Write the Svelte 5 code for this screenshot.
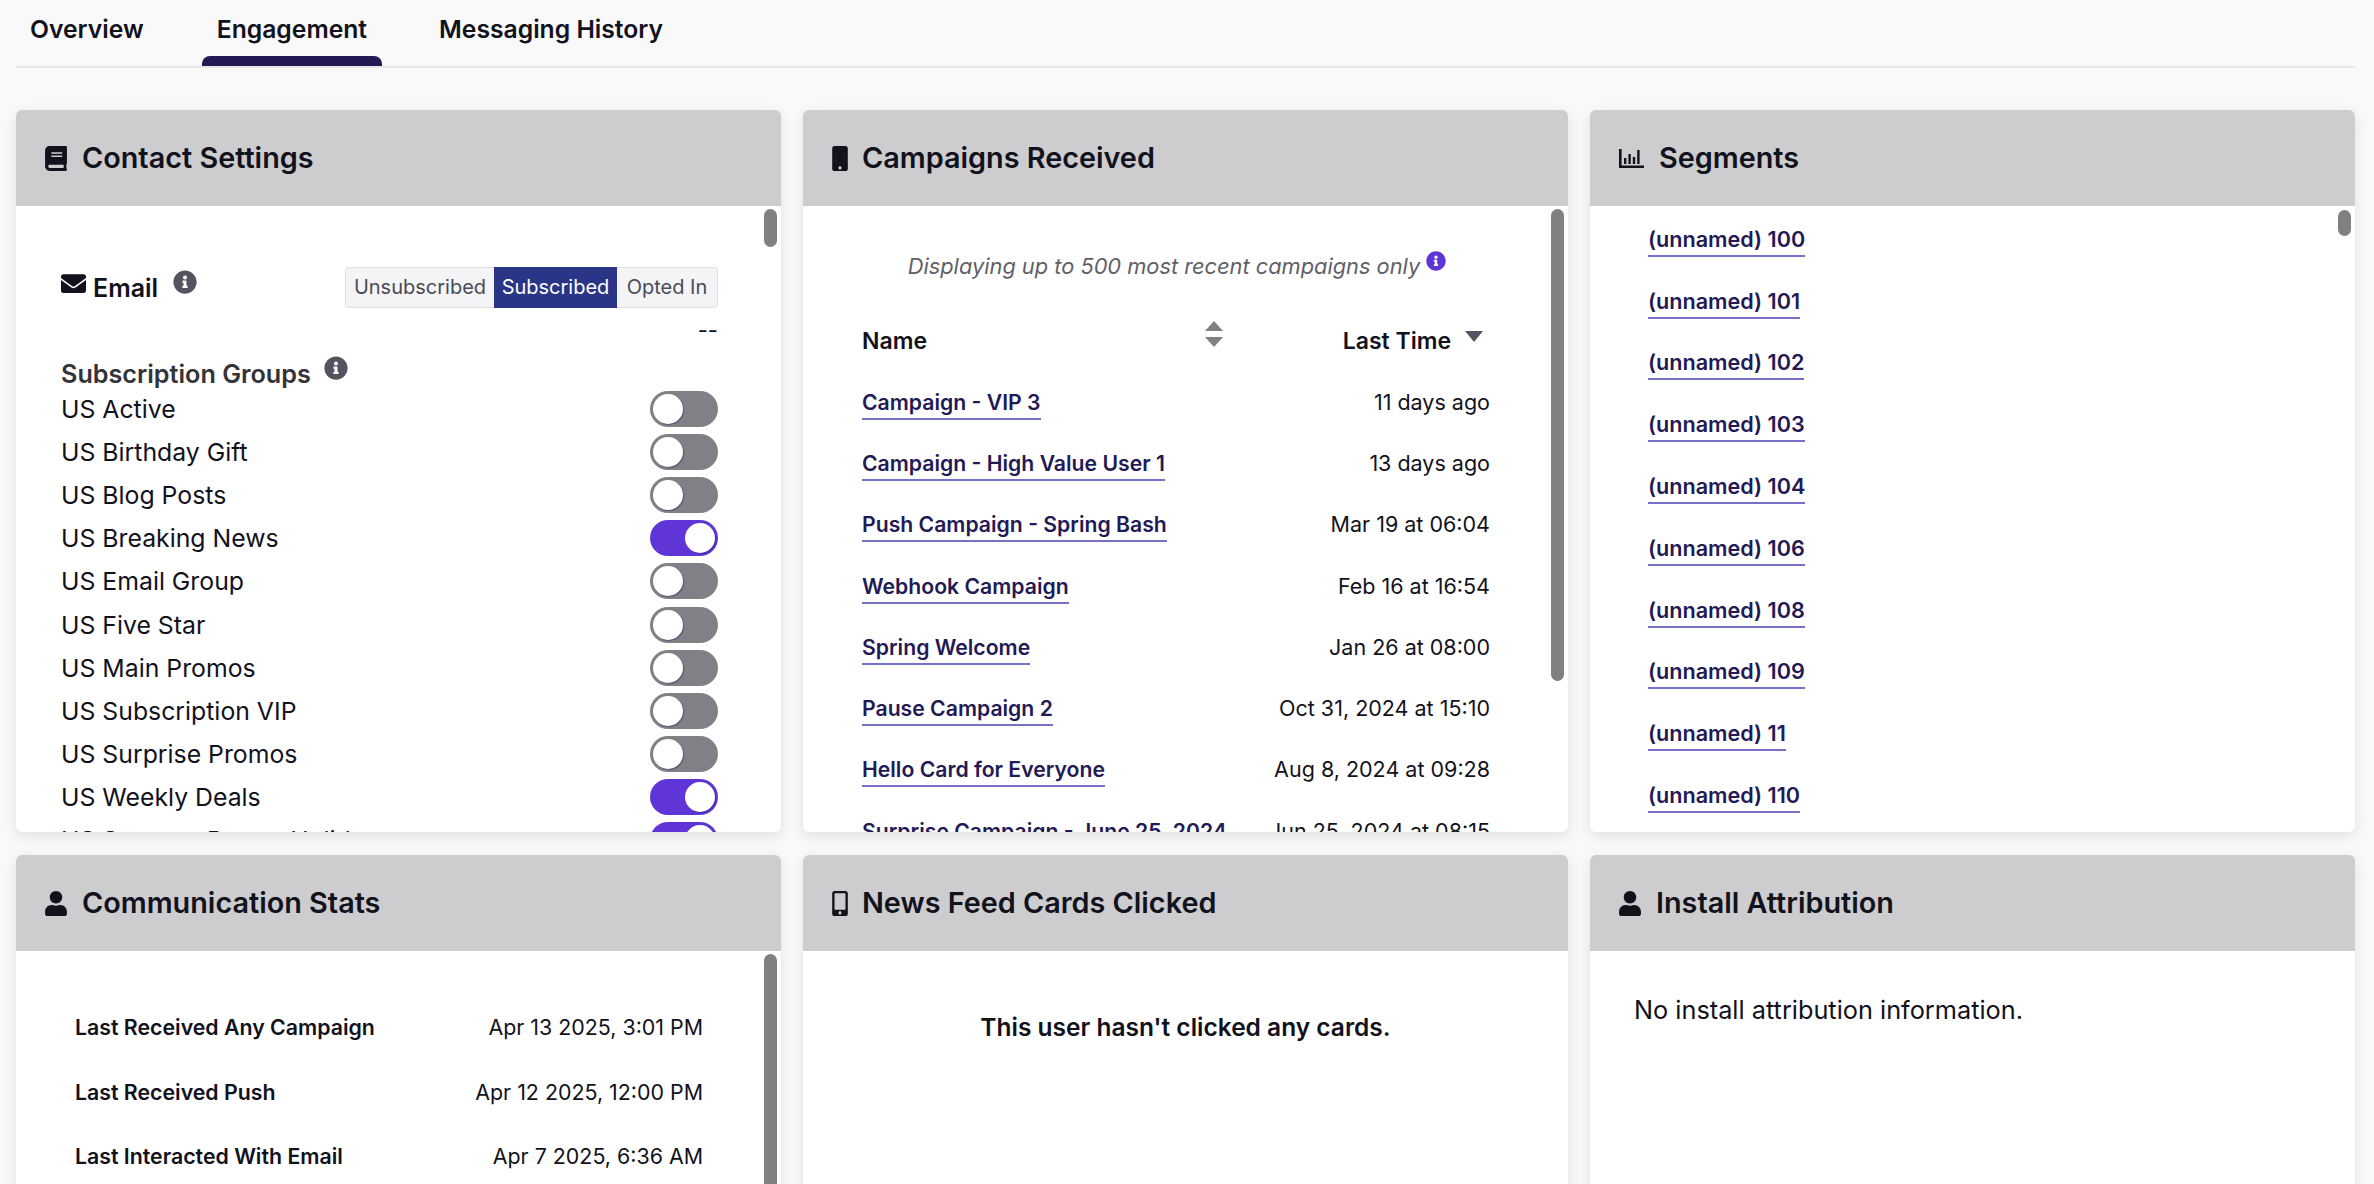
<script>
  const tabs = ['Overview', 'Engagement', 'Messaging History'];
  const groups = [
    ['US Active', false],
    ['US Birthday Gift', false],
    ['US Blog Posts', false],
    ['US Breaking News', true],
    ['US Email Group', false],
    ['US Five Star', false],
    ['US Main Promos', false],
    ['US Subscription VIP', false],
    ['US Surprise Promos', false],
    ['US Weekly Deals', true],
    ['US Summer Promo Holiday', true]
  ];
  const campaigns = [
    ['Campaign - VIP 3', '11 days ago'],
    ['Campaign - High Value User 1', '13 days ago'],
    ['Push Campaign - Spring Bash', 'Mar 19 at 06:04'],
    ['Webhook Campaign', 'Feb 16 at 16:54'],
    ['Spring Welcome', 'Jan 26 at 08:00'],
    ['Pause Campaign 2', 'Oct 31, 2024 at 15:10'],
    ['Hello Card for Everyone', 'Aug 8, 2024 at 09:28'],
    ['Surprise Campaign - June 25, 2024', 'Jun 25, 2024 at 08:15']
  ];
  const segments = ['100', '101', '102', '103', '104', '106', '108', '109', '11', '110'];
  const stats = [
    ['Last Received Any Campaign', 'Apr 13 2025, 3:01 PM'],
    ['Last Received Push', 'Apr 12 2025, 12:00 PM'],
    ['Last Interacted With Email', 'Apr 7 2025, 6:36 AM']
  ];

  // font awesome style paths
  const infoPath = 'M256 8C119 8 8 119.1 8 256c0 137 111 248 248 248s248-111 248-248C504 119.1 393 8 256 8zm0 110c23.2 0 42 18.8 42 42s-18.8 42-42 42-42-18.8-42-42 18.8-42 42-42zm56 254c0 6.6-5.4 12-12 12h-88c-6.6 0-12-5.4-12-12v-24c0-6.6 5.4-12 12-12h12v-64h-12c-6.6 0-12-5.4-12-12v-24c0-6.6 5.4-12 12-12h64c6.6 0 12 5.4 12 12v100h12c6.6 0 12 5.4 12 12v24z';
  const userPath = 'M224 256c70.7 0 128-57.3 128-128S294.7 0 224 0 96 57.3 96 128s57.3 128 128 128zm89.6 32h-16.7c-22.2 10.2-46.9 16-72.9 16s-50.6-5.8-72.9-16h-16.7C60.2 288 0 348.2 0 422.4V464c0 26.5 21.5 48 48 48h352c26.5 0 48-21.5 48-48v-41.6c0-74.2-60.2-134.4-134.4-134.4z';
</script>

<div class="page">
  <nav class="tabs">
    {#each tabs as tab}
      <div class="tab" class:active={tab === 'Engagement'}>{tab}</div>
    {/each}
  </nav>

  <main class="grid">
    <section class="card">
      <header class="card-head">
        <svg class="head-icon" viewBox="0 0 448 512"><path d="M448 360V24c0-13.3-10.7-24-24-24H96C43 0 0 43 0 96v320c0 53 43 96 96 96h328c13.3 0 24-10.7 24-24v-16c0-7.5-3.5-14.3-8.9-18.7-4.2-15.4-4.2-59.3 0-74.7 5.4-4.3 8.9-11.1 8.9-18.6zM128 134c0-3.3 2.7-6 6-6h212c3.3 0 6 2.7 6 6v20c0 3.3-2.7 6-6 6H134c-3.3 0-6-2.7-6-6v-20zm0 64c0-3.3 2.7-6 6-6h212c3.3 0 6 2.7 6 6v20c0 3.3-2.7 6-6 6H134c-3.3 0-6-2.7-6-6v-20zm253.4 250H96c-17.7 0-32-14.3-32-32 0-17.6 14.4-32 32-32h285.4c-1.9 17.1-1.9 46.9 0 64z" /></svg>
        <h2>Contact Settings</h2>
      </header>
      <div class="card-body settings">
        <div class="thumb thumb-settings"></div>
        <div class="email-row">
          <svg class="mail-icon" viewBox="0 0 512 512"><path d="M502.3 190.8c3.9-3.1 9.7-.2 9.7 4.7V400c0 26.5-21.5 48-48 48H48c-26.5 0-48-21.5-48-48V195.6c0-5 5.7-7.8 9.7-4.7 22.4 17.4 52.1 39.5 154.1 113.6 21.1 15.4 56.7 47.8 92.2 47.6 35.7.3 72-32.8 92.3-47.6 102-74.1 131.6-96.3 154-113.7zM256 320c23.2.4 56.6-29.2 73.4-41.4 132.7-96.3 142.8-104.7 173.4-128.7 5.8-4.5 9.2-11.5 9.2-18.9v-19c0-26.5-21.5-48-48-48H48C21.5 64 0 85.5 0 112v19c0 7.4 3.4 14.3 9.2 18.9 30.6 23.9 40.7 32.4 173.4 128.7 16.8 12.2 50.2 41.8 73.4 41.4z" /></svg>
          <span class="email-label">Email</span>
          <svg class="info grey email-info" viewBox="0 0 512 512"><path d={infoPath} /></svg>
          <div class="segmented">
            <span class="seg seg-first">Unsubscribed</span>
            <span class="seg seg-on">Subscribed</span>
            <span class="seg seg-last">Opted In</span>
          </div>
        </div>
        <div class="dashes">--</div>
        <div class="groups-title">
          <span>Subscription Groups</span>
          <svg class="info grey" viewBox="0 0 512 512"><path d={infoPath} /></svg>
        </div>
        {#each groups as [name, on]}
          <div class="group-row">
            <span>{name}</span>
            <span class="toggle" class:on><span class="knob"></span></span>
          </div>
        {/each}
      </div>
    </section>

    <section class="card">
      <header class="card-head">
        <svg class="head-icon phone" viewBox="0 0 320 512"><path d="M272 0H48C21.5 0 0 21.5 0 48v416c0 26.5 21.5 48 48 48h224c26.5 0 48-21.5 48-48V48c0-26.5-21.5-48-48-48zM160 480c-17.7 0-32-14.3-32-32s14.3-32 32-32 32 14.3 32 32-14.3 32-32 32z" /></svg>
        <h2>Campaigns Received</h2>
      </header>
      <div class="card-body campaigns">
        <div class="thumb thumb-campaigns"></div>
        <div class="note">
          <em>Displaying up to 500 most recent campaigns only</em>
          <svg class="info purple" viewBox="0 0 512 512"><path d={infoPath} /></svg>
        </div>
        <div class="table-head">
          <span class="col-name">Name</span>
          <svg class="sort-both" viewBox="0 0 18 26"><path d="M9 0l9 10H0zM9 26L0 16h18z" /></svg>
          <span class="col-time">Last Time</span>
          <svg class="sort-down" viewBox="0 0 18 11"><path d="M0 0h18L9 11z" /></svg>
        </div>
        {#each campaigns as [name, time]}
          <div class="campaign-row">
            <span class="link">{name}</span>
            <span class="time">{time}</span>
          </div>
        {/each}
      </div>
    </section>

    <section class="card">
      <header class="card-head">
        <svg class="head-icon chart" viewBox="0 0 25 19"><path d="M0 0h2.6v16.4H25V19H0zM5 9h2.4v6H5zM9.4 5h2.4v10H9.4zM13.8 8h2.4v7h-2.400zM18.2 1h2.4v14h-2.400z" /></svg>
        <h2>Segments</h2>
      </header>
      <div class="card-body segments">
        <div class="thumb thumb-segments"></div>
        {#each segments as seg}
          <div class="segment-row"><span class="link">(unnamed) {seg}</span></div>
        {/each}
      </div>
    </section>

    <section class="card">
      <header class="card-head">
        <svg class="head-icon" viewBox="0 0 448 512"><path d={userPath} /></svg>
        <h2>Communication Stats</h2>
      </header>
      <div class="card-body stats">
        <div class="thumb thumb-stats"></div>
        {#each stats as [label, value]}
          <div class="stat-row">
            <span class="stat-label">{label}</span>
            <span class="stat-value">{value}</span>
          </div>
        {/each}
      </div>
    </section>

    <section class="card">
      <header class="card-head">
        <svg class="head-icon phone" viewBox="0 0 320 512"><path d="M272 0H48C21.5 0 0 21.5 0 48v416c0 26.5 21.5 48 48 48h224c26.5 0 48-21.5 48-48V48c0-26.5-21.5-48-48-48zM160 480c-17.7 0-32-14.3-32-32s14.3-32 32-32 32 14.3 32 32-14.3 32-32 32zm112-108c0 6.6-5.4 12-12 12H60c-6.6 0-12-5.4-12-12V60c0-6.6 5.4-12 12-12h200c6.6 0 12 5.4 12 12v312z" /></svg>
        <h2>News Feed Cards Clicked</h2>
      </header>
      <div class="card-body empty">This user hasn't clicked any cards.</div>
    </section>

    <section class="card">
      <header class="card-head">
        <svg class="head-icon install" viewBox="0 0 448 512"><path d={userPath} /></svg>
        <h2>Install Attribution</h2>
      </header>
      <div class="card-body attribution">No install attribution information.</div>
    </section>
  </main>
</div>

<style>
  :global(body) {
    margin: 0;
    background: #f9f9f9;
    overflow: hidden;
  }

  .page {
    height: 1184px;
    overflow: hidden;
    padding: 0 19px 0 16px;
    box-sizing: border-box;
    color: #12121c;
    font-family: 'Inter', 'Open Sans', sans-serif;
  }

  .tabs {
    display: flex;
    height: 66px;
    border-bottom: 2px solid #e8e8ea;
  }

  .tab {
    position: relative;
    padding: 11px 15px 0;
    margin-right: 42px;
    font-size: 24.7px;
    font-weight: 600;
    line-height: 36px;
  }

  .tab:first-child {
    padding-left: 14px;
    margin-right: 43px;
  }

  .tab.active::after {
    content: '';
    position: absolute;
    left: 0;
    right: 0;
    bottom: 0;
    height: 10px;
    background: #231a55;
    border-radius: 8px 8px 0 0;
  }

  .grid {
    display: grid;
    grid-template-columns: repeat(3, 765px);
    grid-template-rows: 722px 722px;
    column-gap: 22px;
    row-gap: 23px;
    margin-top: 42px;
  }

  .card {
    display: flex;
    flex-direction: column;
    background: #fff;
    border-radius: 6px;
    overflow: hidden;
    box-shadow: 0 4px 14px rgba(0, 0, 0, 0.1);
  }

  .card-head {
    display: flex;
    align-items: center;
    flex: none;
    height: 96px;
    padding-left: 29px;
    background: #cdcdcf;
  }

  .card-head h2 {
    margin: 0;
    font-size: 28.8px;
    font-weight: 600;
    line-height: 36px;
  }

  .head-icon {
    width: 22px;
    height: 25px;
    margin-right: 15px;
    fill: #12121c;
  }

  .head-icon.phone {
    width: 16px;
    margin-right: 14px;
  }

  .head-icon.chart {
    width: 25px;
    height: 19px;
    margin-right: 15px;
  }

  .head-icon.install {
    margin-right: 15px;
  }

  .card-body {
    position: relative;
    flex: 1;
    overflow: hidden;
  }

  .thumb {
    position: absolute;
    right: 4px;
    width: 13px;
    border-radius: 7px;
    background: #808080;
  }

  .thumb-settings { top: 3px; height: 38px; }
  .thumb-campaigns { top: 3px; height: 472px; }
  .thumb-segments { top: 4px; height: 26px; }
  .thumb-stats { top: 3px; height: 500px; }

  .info {
    width: 24px;
    height: 24px;
  }

  .info.grey { fill: #55535f; }
  .info.purple { fill: #5f35d8; width: 20px; height: 20px; }

  .settings {
    padding: 61px 63px 0 45px;
  }

  .email-row {
    display: flex;
    align-items: center;
    height: 41px;
  }

  .mail-icon {
    width: 25px;
    height: 25px;
    margin-top: -8px;
    margin-right: 7px;
    fill: #12121c;
  }

  .email-label {
    font-size: 25px;
    font-weight: 600;
    line-height: 36px;
  }

  .email-info {
    margin: -11px 0 0 15px;
  }

  .segmented {
    display: flex;
    margin-left: auto;
    height: 41px;
    font-size: 20px;
    line-height: 39px;
    color: #4a4a54;
  }

  .seg {
    box-sizing: border-box;
    text-align: center;
    background: #f4f4f6;
    border: 1px solid #e0e0e4;
  }

  .seg-first { width: 149px; border-radius: 4px 0 0 4px; border-right: 0; }
  .seg-on { width: 123px; background: #2a3587; border-color: #2a3587; color: #fff; }
  .seg-last { width: 101px; border-radius: 0 4px 4px 0; border-left: 0; }

  .dashes {
    text-align: right;
    font-size: 22px;
    line-height: 22px;
    margin-top: 11px;
  }

  .groups-title {
    display: flex;
    align-items: flex-start;
    gap: 13px;
    margin-top: 15px;
    height: 31px;
    font-size: 25.2px;
    font-weight: 600;
    line-height: 36px;
    color: #33333a;
  }

  .groups-title .info {
    margin-top: 0;
  }

  .group-row {
    display: flex;
    align-items: center;
    justify-content: space-between;
    height: 43.2px;
    font-size: 24.8px;
  }

  .toggle {
    box-sizing: border-box;
    display: flex;
    width: 68px;
    height: 36px;
    padding: 3px;
    border-radius: 18px;
    background: #808086;
  }

  .toggle.on {
    justify-content: flex-end;
    background: #5f35d8;
  }

  .knob {
    width: 30px;
    height: 30px;
    border-radius: 50%;
    background: #fff;
    box-shadow: 1px 1px 1px rgba(20, 40, 90, 0.45);
  }

  .campaigns {
    padding: 0 78px 0 59px;
  }

  .note {
    display: flex;
    justify-content: center;
    align-items: flex-start;
    gap: 6px;
    margin: 42px -3px 0 -1px;
    height: 36px;
    font-size: 21.8px;
    line-height: 36px;
    color: #5f5f68;
  }

  .note .info {
    margin-top: 3px;
  }

  .table-head {
    position: relative;
    display: flex;
    align-items: center;
    justify-content: space-between;
    margin-top: 39px;
    height: 36px;
    padding-right: 39px;
    font-size: 23px;
    font-weight: 600;
  }

  .sort-both {
    position: absolute;
    left: 343px;
    top: -2px;
    width: 18px;
    height: 26px;
    fill: #808086;
  }

  .sort-down {
    position: absolute;
    right: 7px;
    top: 8px;
    width: 18px;
    height: 11px;
    fill: #55535f;
  }

  .campaign-row {
    display: flex;
    align-items: center;
    justify-content: space-between;
    height: 61.3px;
    font-size: 21.5px;
    white-space: nowrap;
  }

  .table-head + .campaign-row {
    margin-top: 13px;
  }

  .time {
    margin-top: -2px;
  }

  .link {
    color: #231a55;
    font-size: 21.2px;
    font-weight: 600;
    line-height: 32px;
    border-bottom: 2px solid #7571c9;
  }

  .segments {
    padding: 3px 0 0 58px;
  }

  .segment-row {
    display: flex;
    align-items: center;
    height: 61.8px;
    font-size: 21.6px;
  }

  .segment-row .link {
    font-size: 21.6px;
  }

  .stats {
    padding: 44px 78px 0 59px;
  }

  .stat-row {
    display: flex;
    align-items: center;
    justify-content: space-between;
    height: 64.5px;
    font-size: 21.4px;
  }

  .stat-label {
    font-size: 21.3px;
    font-weight: 600;
  }

  .empty {
    padding-top: 58px;
    text-align: center;
    font-size: 24.5px;
    font-weight: 600;
    line-height: 36px;
  }

  .attribution {
    padding: 41px 0 0 44px;
    font-size: 25.3px;
    line-height: 36px;
  }
</style>
